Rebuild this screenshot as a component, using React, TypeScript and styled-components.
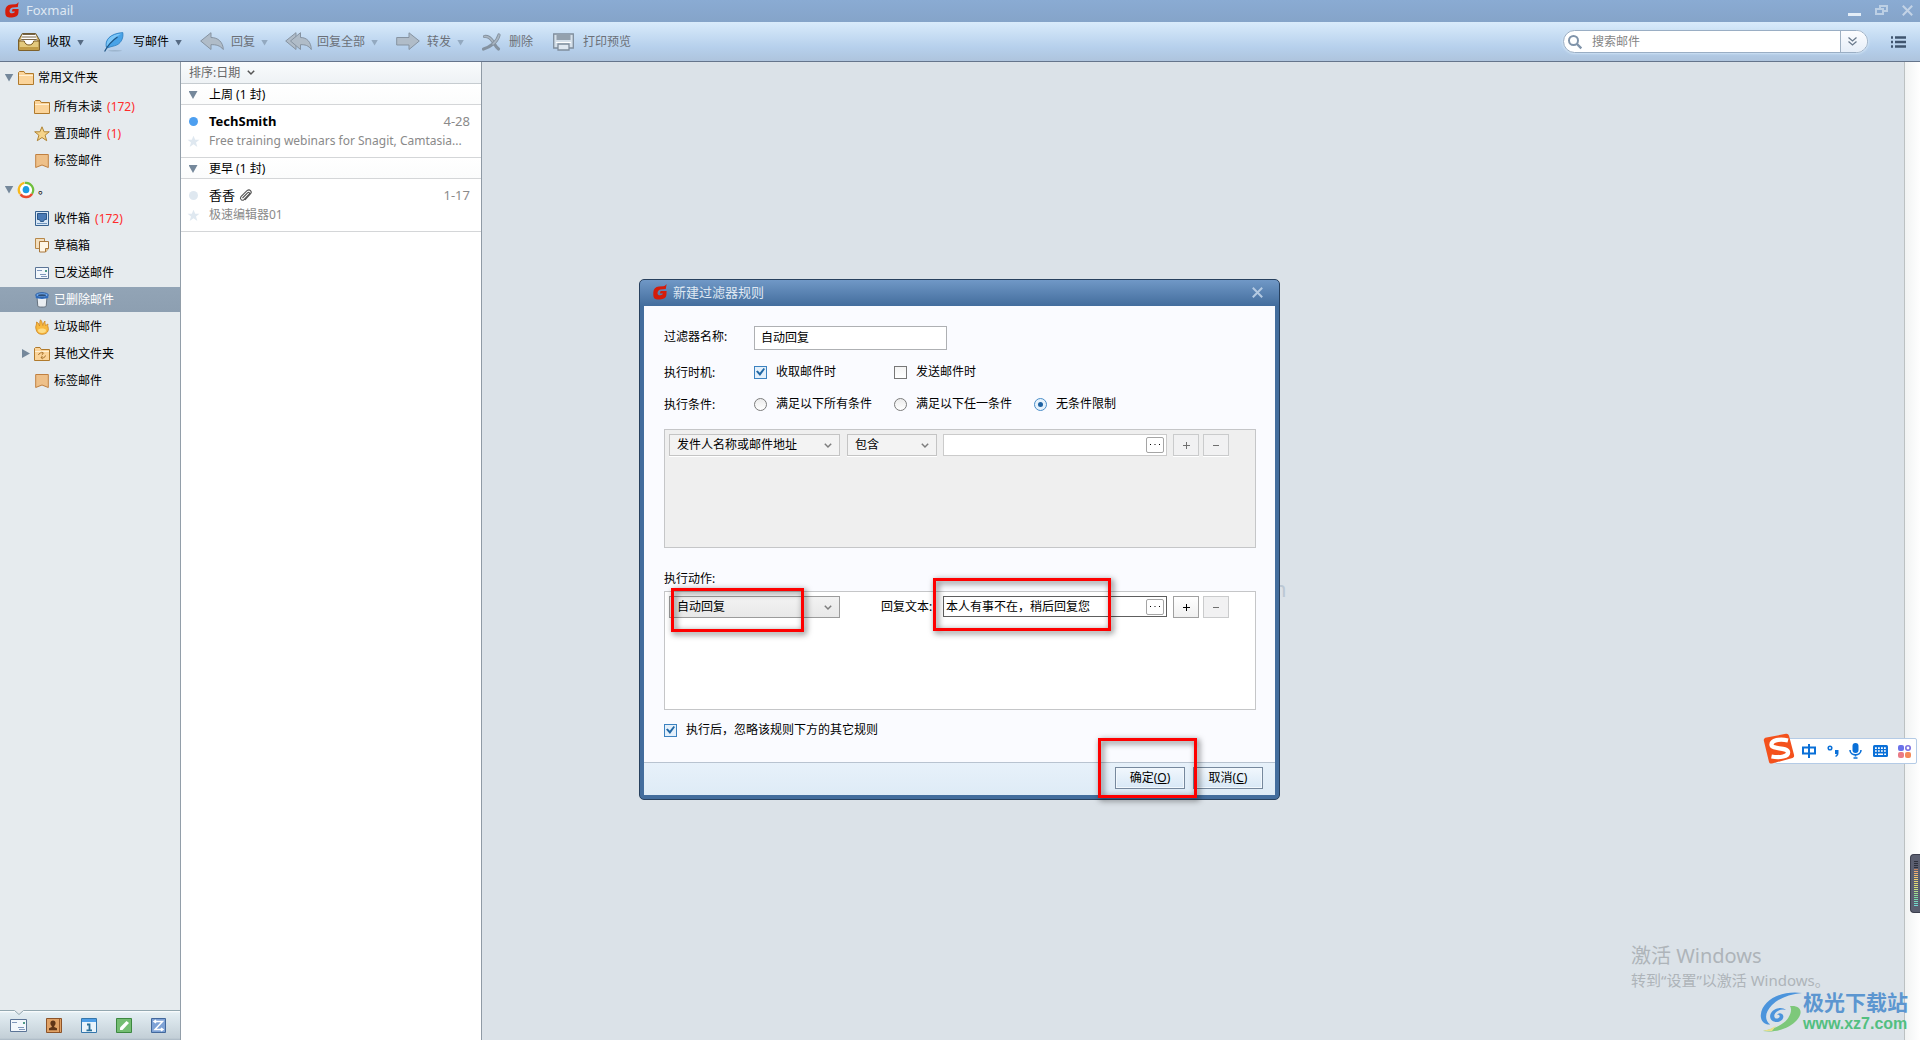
import React from "react";
import styled, { createGlobalStyle, css } from "styled-components";

const GlobalStyle = createGlobalStyle`
  * { box-sizing: border-box; }
  html, body { margin: 0; padding: 0; height: 100%; overflow: hidden; }
  body, button, input, select {
    font-family: "Noto Sans", "Noto Sans CJK SC", sans-serif;
    font-size: 12px;
    line-height: 20px;
    color: #000;
  }
  button { border: 0; padding: 0; margin: 0; background: none; }
  input, select { margin: 0; border-radius: 0; }
  svg { display: block; flex: none; overflow: visible; }
`;

/* ---------- window shell ---------- */

const Shell = styled.div`
  position: relative;
  display: flex;
  flex-direction: column;
  height: 100vh;
  min-height: 820px;
  overflow: hidden;
  background: #dbe2e8;
`;

const TitleBar = styled.header`
  display: flex;
  align-items: center;
  height: 22px;
  padding: 0 7px 2px 5px;
  background: linear-gradient(#8aabd3, #85a4c9);
`;

const AppName = styled.h1`
  flex: 1;
  margin: 0 0 0 7px;
  font-size: 13px;
  font-weight: 400;
  line-height: 20px;
  color: #dfe8f3;
`;

const WindowControls = styled.div`
  display: flex;
  align-items: center;
  gap: 14px;
`;

const Toolbar = styled.nav`
  display: flex;
  align-items: center;
  height: 40px;
  padding: 0 14px 0 18px;
  background: linear-gradient(#d9ebfb, #b6d0ec 65%, #aec4dd);
  border-bottom: 1px solid #65758c;
`;

const Tools = styled.div`
  display: flex;
  flex: 1;
  gap: 18px;
`;

const Tool = styled.button<{ $muted?: boolean }>`
  display: flex;
  align-items: center;
  height: 24px;
  color: ${(p) => (p.$muted ? "#6b7078" : "#000")};
`;

const ToolIcon = styled.span<{ $w: number }>`
  display: flex;
  justify-content: center;
  width: ${(p) => p.$w}px;
  margin-right: 7px;
`;

const Triangle = styled.i<{ $color?: string; $right?: boolean; $size?: number }>`
  display: block;
  width: ${(p) => (p.$right ? 8 : p.$size ?? 9)}px;
  height: ${(p) => (p.$right ? 9 : (p.$size ?? 9) - 1)}px;
  background: ${(p) => p.$color ?? "#75889b"};
  clip-path: ${(p) => (p.$right ? "polygon(0 0, 100% 50%, 0 100%)" : "polygon(0 0, 100% 0, 50% 100%)")};
`;

const ToolArrow = styled(Triangle)`
  margin: 2px 0 0 6px;
`;

const SearchBox = styled.form`
  display: flex;
  align-items: center;
  width: 305px;
  height: 23px;
  margin-right: 23px;
  padding-left: 4px;
  overflow: hidden;
  background: #fff;
  border: 1px solid #9aaec4;
  border-radius: 12px;
  box-shadow: 0 0 2px 1px #cfe2f4;
`;

const SearchInput = styled.input`
  flex: 1;
  min-width: 0;
  height: 20px;
  padding: 0 0 0 10px;
  border: 0;
  outline: 0;
  background: none;
  &::placeholder { color: #858585; opacity: 1; }
`;

const SearchMore = styled.button`
  display: flex;
  align-items: center;
  justify-content: center;
  width: 27px;
  height: 21px;
  padding-right: 4px;
  border-left: 1px solid #9fb0c2;
  background: linear-gradient(#fcfdff, #e6eef8);
`;

const Main = styled.div`
  display: flex;
  flex: 1;
  min-height: 0;
`;

/* ---------- folder tree ---------- */

const Sidebar = styled.aside`
  display: flex;
  flex-direction: column;
  width: 181px;
  background: #e6ebee;
  border-right: 1px solid #929ea9;
`;

const Tree = styled.ul`
  flex: 1;
  margin: 0;
  padding: 0;
  list-style: none;
`;

const Folder = styled.li<{ $root?: boolean; $selected?: boolean }>`
  display: flex;
  align-items: center;
  gap: 4px;
  height: ${(p) => (p.$root ? 31 : 27)}px;
  padding-left: ${(p) => (p.$root ? 4 : 20)}px;
  ${(p) =>
    p.$selected &&
    css`
      height: 25px;
      margin: 1px 0;
      color: #fff;
      background: linear-gradient(#92a4b6, #8d9fb1);
    `}
`;

const Slot = styled.span<{ $w: number; $end?: boolean }>`
  display: flex;
  justify-content: ${(p) => (p.$end ? "flex-end" : "center")};
  width: ${(p) => p.$w}px;
`;

const Count = styled.span`
  margin-left: 1px;
  color: #ff2b2b;
`;

const ModuleBar = styled.div`
  display: flex;
  height: 30px;
  padding-left: 1px;
  border-top: 1px solid #93a8b0;
  background: linear-gradient(#fff, #e3eef3 2px, #c3cfd7 27px, #a9b7c3);
`;

const ModuleButton = styled.button`
  position: relative;
  display: flex;
  align-items: center;
  justify-content: center;
  width: 35px;
  height: 29px;
`;

const Notch = styled.svg`
  position: absolute;
  top: -1px;
  left: 13px;
`;

/* ---------- message list ---------- */

const MessageList = styled.section`
  width: 301px;
  background: #fff;
  border-right: 1px solid #8f9aa5;
`;

const SortBar = styled.button`
  display: flex;
  align-items: center;
  gap: 7px;
  width: 100%;
  height: 22px;
  padding-left: 8px;
  color: #686868;
  background: linear-gradient(#f9fbfc, #eef2f5);
  border-bottom: 1px solid #c6ccd0;
`;

const GroupHead = styled.h2`
  display: flex;
  align-items: center;
  gap: 8px;
  height: 21px;
  margin: 0;
  padding: 2px 0 0 4px;
  font-size: 12px;
  font-weight: 400;
  background: linear-gradient(#fff, #fbfcfc);
  border-bottom: 1px solid #d4d6d8;
`;

const Message = styled.article`
  display: grid;
  grid-template-columns: 16px 1fr auto;
  column-gap: 8px;
  align-items: center;
  justify-items: start;
  padding: 6px 11px 6px 4px;
  border-bottom: 1px solid #d4d6d8;
`;

const Dot = styled.i<{ $unread?: boolean }>`
  justify-self: center;
  width: 9px;
  height: 9px;
  border-radius: 50%;
  background: ${(p) => (p.$unread ? "#4d9ff0" : "#dfe8f0")};
`;

const Sender = styled.strong<{ $unread?: boolean }>`
  display: flex;
  align-items: center;
  gap: 4px;
  font-size: 13px;
  font-weight: ${(p) => (p.$unread ? 700 : 400)};
`;

const DateText = styled.time`
  font-size: 13px;
  color: #8a8a8a;
`;

const Star = styled.svg`
  justify-self: center;
`;

const Subject = styled.p`
  grid-column: 2 / 4;
  margin: 0;
  color: #8a8a8a;
  white-space: nowrap;
`;

const Preview = styled.main`
  flex: 1;
`;

const Gutter = styled.div`
  width: 16px;
  background: linear-gradient(90deg, #f1f3f3, #fff);
  border-left: 1px solid #bcc1c2;
`;

/* ---------- filter dialog ---------- */

const Backdrop = styled.span`
  position: absolute;
  top: 573px;
  left: calc(50% + 313px);
  font-size: 22px;
  line-height: 30px;
  color: #bcc8d4;
`;

const Dialog = styled.div`
  position: absolute;
  top: 279px;
  left: calc(50% - 321px);
  width: 641px;
  padding: 0 4px 4px;
  border: 1px solid #27405e;
  border-radius: 5px;
  background: linear-gradient(#7098c6, #436d9d 26px);
`;

const DialogTitle = styled.header`
  display: flex;
  align-items: center;
  height: 26px;
  padding: 0 12px 2px 9px;
`;

const DialogName = styled.h2`
  flex: 1;
  margin: 0 0 0 6px;
  font-size: 13px;
  font-weight: 400;
  line-height: 20px;
  color: #dfe8f2;
`;

const DialogBody = styled.div`
  padding: 20px 19px 22px 20px;
  background: #fafbff;
`;

const Fields = styled.div`
  display: grid;
  gap: 12px;
  margin-bottom: 15px;
`;

const FieldRow = styled.div<{ $h?: number }>`
  display: grid;
  grid-template-columns: 90px 140px 140px 1fr;
  height: ${(p) => p.$h ?? 20}px;
`;

const FieldLabel = styled.label`
  line-height: 22px;
`;

const NameInput = styled.input`
  grid-column: 2 / 4;
  width: 193px;
  height: 24px;
  padding: 0 6px 2px;
  border: 1px solid #aeb0b3;
  background: #fff;
`;

const Option = styled.label`
  display: flex;
  align-items: center;
  gap: 9px;
  height: 20px;
`;

const Check = styled.input`
  appearance: none;
  display: flex;
  align-items: center;
  justify-content: center;
  width: 13px;
  height: 13px;
  border: 1px solid #777;
  background: linear-gradient(#f4f4f4, #fff);
  &:checked {
    border-color: #3c82c0;
    background: #e4f0fb;
  }
  &:checked::before {
    content: "";
    width: 9px;
    height: 8px;
    background: #2268a5;
    clip-path: polygon(0 45%, 18% 30%, 42% 60%, 84% 0, 100% 14%, 44% 100%);
  }
`;

const Radio = styled.input`
  appearance: none;
  display: flex;
  align-items: center;
  justify-content: center;
  width: 13px;
  height: 13px;
  border: 1px solid #7b7b7b;
  border-radius: 50%;
  background: linear-gradient(#ececec, #fff);
  &:checked {
    border-color: #4a8dc8;
    background: #e6f2fc;
  }
  &:checked::before {
    content: "";
    width: 5px;
    height: 5px;
    border-radius: 50%;
    background: #1d62a3;
  }
`;

const RuleBox = styled.div<{ $off?: boolean }>`
  display: flex;
  align-items: flex-start;
  height: 119px;
  padding: 4px;
  border: 1px solid #c5c6c8;
  background: ${(p) => (p.$off ? "#efefef" : "#fff")};
`;

const SelectWrap = styled.span<{ $w: number }>`
  position: relative;
  width: ${(p) => p.$w}px;
  margin-right: ${(p) => (p.$w > 100 ? 7 : 6)}px;
  svg { position: absolute; right: 8px; top: 9px; pointer-events: none; }
`;

const Select = styled.select<{ $off?: boolean }>`
  appearance: none;
  display: block;
  width: 100%;
  height: 22px;
  padding: 0 7px;
  border: 1px solid ${(p) => (p.$off ? "#c4c4c4" : "#9b9b9b")};
  background: ${(p) => (p.$off ? "#f3f3f3" : "linear-gradient(#f2f2f2, #e8e8e8)")};
  box-shadow: ${(p) => (p.$off ? "0 1px 0 #fff" : "none")};
`;

const ValueBox = styled.span<{ $off?: boolean }>`
  display: flex;
  align-items: center;
  width: 224px;
  height: ${(p) => (p.$off ? 22 : 21)}px;
  margin-right: 6px;
  padding-right: 2px;
  border: 1px solid ${(p) => (p.$off ? "#cbcbcb" : "#5e5e5e")};
  background: #fff;
`;

const ValueInput = styled.input`
  flex: 1;
  min-width: 0;
  height: 19px;
  padding: 0 2px;
  border: 0;
  background: none;
`;

const MoreButton = styled.button`
  display: flex;
  align-items: center;
  justify-content: center;
  width: 18px;
  height: 16px;
  border: 1px solid #a5a5a5;
  border-radius: 2px;
  background: #fff;
`;

const StepButton = styled.button<{ $off?: boolean }>`
  display: flex;
  align-items: center;
  justify-content: center;
  width: 26px;
  height: 22px;
  margin-right: 4px;
  border: 1px solid ${(p) => (p.$off ? "#cacbcc" : "#a0a0a0")};
  background: ${(p) => (p.$off ? "#f1f1f2" : "linear-gradient(#fff, #f0f0f0)")};
  box-shadow: 0 1px 0 #fff;
`;

const ReplyLabel = styled.label`
  width: 62px;
  margin-left: 34px;
  line-height: 22px;
`;

const SectionLabel = styled.p`
  margin: 21px 0 2px;
`;

const LastOption = styled(Option)`
  margin-top: 10px;
`;

const DialogFooter = styled.footer`
  display: flex;
  justify-content: flex-end;
  gap: 8px;
  height: 33px;
  padding: 4px 12px 0 0;
  border-top: 1px solid #b8c3d0;
  background: linear-gradient(#e7f1fa, #deebf6);
`;

const DialogButton = styled.button`
  width: 70px;
  height: 22px;
  border: 1px solid #76889d;
  background: linear-gradient(#f1f7fd, #d8e8f6);
  box-shadow: inset 0 0 0 1px #f2f8fd;
`;

const Highlight = styled.div<{ $x: number; $y: number; $w: number; $h: number }>`
  position: absolute;
  left: ${(p) => p.$x}px;
  top: ${(p) => p.$y}px;
  width: ${(p) => p.$w}px;
  height: ${(p) => p.$h}px;
  border: 3px solid #fe0000;
  filter: drop-shadow(2px 2px 3px rgba(0, 0, 0, 0.65));
  pointer-events: none;
`;

/* ---------- desktop overlays ---------- */

const ImeBar = styled.div`
  position: absolute;
  top: 738px;
  right: 3px;
  display: flex;
  align-items: center;
  justify-content: space-between;
  width: 142px;
  height: 26px;
  padding: 0 5px 0 26px;
  border: 1px solid #b4cbe6;
  border-radius: 2px;
  background: #fff;
`;

const ImeLogo = styled.svg`
  position: absolute;
  left: -13px;
  top: -6px;
`;

const Meter = styled.div`
  position: absolute;
  top: 854px;
  right: 0;
  width: 10px;
  height: 59px;
  padding: 6px 2px 6px 3px;
  border: 1px solid #3c3f4e;
  border-right: 0;
  border-radius: 4px 0 0 4px;
  background: #5b5f70;
`;

const MeterBars = styled.div`
  height: 45px;
  background: linear-gradient(#2d303c 7px, #f0a070 9px, #f0d070 18px, #d5e27a 27px, #7fdc9c 36px, #6fd8d8);
  mask-image: repeating-linear-gradient(#000 0 1px, transparent 1px 2px);
`;

const Activation = styled.div`
  position: absolute;
  right: 94px;
  bottom: 50px;
  width: 195px;
  color: #aeb4b9;
  white-space: nowrap;
`;

const ActivationTitle = styled.p`
  margin: 0;
  font-size: 20px;
  line-height: 28px;
`;

const ActivationText = styled.p`
  margin: 0;
  font-size: 15px;
  line-height: 20px;
`;

const SiteMark = styled.div`
  position: absolute;
  right: 12px;
  bottom: 6px;
  display: flex;
  align-items: center;
  gap: 1px;
`;

const SiteName = styled.p`
  margin: 0;
  font-size: 21px;
  font-weight: 700;
  line-height: 24px;
  color: #5c96d0;
`;

const SiteUrl = styled.p`
  margin: 0;
  font-family: "Liberation Sans", sans-serif;
  font-size: 16px;
  font-weight: 700;
  line-height: 20px;
  color: #52bf80;
`;

/* ---------- drawings ---------- */

const FoxLogo = () => (
  <svg width="14" height="16" viewBox="0 0 14 16">
    <path d="M13.600 0 12.800 5 7.500 5.400C5.300 5.700 4.600 7.600 4.500 9.300c0 1.400 1 2.100 2.700 2 1.500-.1 2.500-.7 2.700-1.700H6.800L7.600 6.900h6l-.2 4.200c-.4 2.900-2.600 4.300-6.400 4.300H4.200C1.500 15.400.3 13.700.3 11V8.300C.5 4.800 2.500 2.700 6 2.500l4.300-.3c1.500-.2 2.500-1 3.300-2.200z" fill="#d51c0a" />
  </svg>
);

const CloseIcon = ({ color = "#c3d3e6" }: { color?: string }) => (
  <svg width="11" height="11" viewBox="0 0 11 11">
    <path d="M.8.8l9.400 9.400M10.200.8.800 10.200" stroke={color} strokeWidth="2" />
  </svg>
);

const Chevron = ({ color = "#7d7d7d" }: { color?: string }) => (
  <svg width="8" height="5" viewBox="0 0 8 5">
    <path d="M.8.8 4 4 7.200.8" fill="none" stroke={color} strokeWidth="1.500" />
  </svg>
);

const InboxTool = () => (
  <svg width="22" height="18" viewBox="0 0 22 18">
    <path d="M4.300.5h13.400l3.800 6.500v9.500a1 1 0 0 1-1 1h-19a1 1 0 0 1-1-1V7z" fill="#cfae62" stroke="#6d5a34" />
    <path d="M4.500 1h13l2 7.500-4 1L11 13 6.500 9.500l-4-1z" fill="#fff" />
    <path d="M4.500 1.500h13M4 4h14M3.200 6.500h15.600" stroke="#776547" />
    <path d="M.8 8h5.400c.7 2.600 2.300 4 4.800 4s4.100-1.400 4.800-4h5.400v9.200H.8z" fill="#e3c97d" stroke="#7a5a22" />
    <path d="M1.500 14h19v2.800h-19z" fill="#c19c47" />
  </svg>
);

const FeatherTool = () => (
  <svg width="20" height="20" viewBox="0 0 20 20">
    <ellipse cx="11" cy="18.700" rx="7" ry=".8" fill="#9cb4cc" />
    <path d="M2.300 15C.8 8.500 5.500 1.500 18.800.6 19.800 6.500 16.500 12.500 10.500 13.800c-2.500.6-4.700 1.200-7 2z" fill="#48a3e8" />
    <path d="M2.300 14C1.500 8 6.500 2 18 1.200 12 4.500 7 9 3.500 14z" fill="#7cc6f7" />
    <path d="M2.300 15C.8 8.500 5.500 1.500 18.800.6 19.800 6.500 16.500 12.500 10.500 13.800c-2.500.6-4.700 1.200-7 2z" fill="none" stroke="#2a7cbf" strokeWidth=".8" />
    <path d="M.6 19.500C3 15 7.500 9 13.500 5" fill="none" stroke="#1f5583" strokeWidth="1.200" />
  </svg>
);

const grey = { fill: "#b0bcc8", stroke: "#8693a1", strokeLinejoin: "round" as const };

const ReplyTool = () => (
  <svg width="24" height="19" viewBox="0 0 24 19">
    <path d="M.7 9 11 .7v4.800C18 5.500 23 10 23.300 17.500 20 13.500 16 12.500 11 12.700V17.500z" {...grey} />
  </svg>
);

const ReplyAllTool = () => (
  <svg width="27" height="19" viewBox="0 0 27 19">
    <path d="M.7 9 11 .7v16.800z" {...grey} />
    <path d="M5.500 9 15.500.7v4.800C22 5.500 26 10 26.300 17.500 23.500 13.500 20 12.500 15.500 12.700V17.500z" {...grey} />
  </svg>
);

const ForwardTool = () => (
  <svg width="24" height="19" viewBox="0 0 24 19">
    <path d="M.7 5.500H13V.8L23.300 9 13 17.500V13H.7z" {...grey} />
  </svg>
);

const DeleteTool = () => (
  <svg width="20" height="18" viewBox="0 0 20 18">
    <path d="M2.500 3.500c4-.5 6 1.500 8 4.500s3 5.500 6 8M17 2c-1 4-3 6.500-6 9s-6 4-9.500 5" fill="none" stroke="#8492a0" strokeWidth="3.200" strokeLinecap="round" />
    <path d="M2.500 3.500c4-.5 6 1.500 8 4.500M17 2c-1 4-3 6.500-6 9" fill="none" stroke="#aab6c2" strokeWidth="1.600" strokeLinecap="round" />
  </svg>
);

const PrintTool = () => (
  <svg width="21" height="18" viewBox="0 0 21 18">
    <path d="M.7 1h19.600v14H.7z" fill="#d5e0ea" stroke="#7f8d9c" strokeWidth="1.300" />
    <path d="M3.500 1.500h14V7h-14z" fill="#94a1ae" />
    <path d="M3 9.500h15" stroke="#fff" />
    <path d="M5 11h11v6H5z" fill="#dfe8f1" stroke="#7f8d9c" strokeWidth="1.300" />
  </svg>
);

const FolderIcon = ({ sync }: { sync?: boolean }) => (
  <svg width="16" height="14" viewBox="0 0 16 14">
    <path d="M.5 13.500V1.500l1-1H6l1.200 2h8.300v11z" fill="#fbd49a" stroke="#b07a2c" />
    <path d="M1 4.500h14" stroke="#fff0d4" />
    {sync && (
      <path
        d="M4.500 8a3 3 0 0 1 4.500-1.800M11.500 8.500A3 3 0 0 1 7 10.500M8 4.800l1.500 1.500L7.700 8M8.500 9 7 10.500l1.700 1.400"
        fill="none"
        stroke="#a8722c"
      />
    )}
  </svg>
);

const starPath = "M8 .8l2.100 5h5.200l-4.200 3.400 1.600 5.500L8 11.500l-4.700 3.200 1.600-5.500L.7 5.800h5.200z";

const StarIcon = () => (
  <svg width="16" height="16" viewBox="0 0 16 16">
    <path d={starPath} fill="#f6d489" stroke="#b08434" />
  </svg>
);

const PaleStar = () => (
  <Star width="13" height="13" viewBox="0 0 16 16">
    <path d={starPath} fill="#dfe8f0" />
  </Star>
);

const TagIcon = () => (
  <svg width="14" height="14" viewBox="0 0 14 14">
    <path d="M.7.5h12.600v13L7 11 .7 13.500z" fill="#eec089" stroke="#c08040" />
  </svg>
);

const InboxIcon = () => (
  <svg width="14" height="15" viewBox="0 0 14 15">
    <path d="M.5.5h13v14H.5z" fill="#d7e6f5" stroke="#35608f" />
    <path d="M2.500 2.500h9v6h-2l-1 2h-3l-1-2h-2z" fill="#4a7ab5" stroke="#2c5788" />
    <path d="M2 12.500h10" stroke="#7095bd" />
  </svg>
);

const DraftIcon = () => (
  <svg width="14" height="15" viewBox="0 0 14 15">
    <path d="M.5.500h9v10h-9z" fill="#f3dfbf" stroke="#b78849" />
    <path d="M4.500 3.500h9v7l-3 3.500h-6z" fill="#fff6e6" stroke="#a8763a" />
    <path d="M13.500 10.500h-3V14" fill="#ecc98f" stroke="#a8763a" />
  </svg>
);

const MailIcon = ({ w = 14, h = 12 }: { w?: number; h?: number }) => (
  <svg width={w} height={h} viewBox={`0 0 ${w} ${h}`}>
    <path d={`M.5.500h${w - 1}v${h - 1}H.500z`} fill="#f2f7fc" stroke="#5b7496" />
    <path d={`M2 3.500h5M${w - 9} ${h - 5}.5h6M${w - 8} ${h - 3}.5h6`} stroke="#7f97bb" />
    <path d={`M${w - 4} 3h2v2h-2z`} fill="#4f9a86" />
  </svg>
);

const TrashIcon = () => (
  <svg width="14" height="16" viewBox="0 0 14 16">
    <path d="M2 5h10l-.8 9.200c0 1.200-8.400 1.200-8.400 0z" fill="#e9edf1" stroke="#66727f" />
    <path d="M.7 3.200h12.600v2.600c-2 1.500-10.600 1.500-12.600 0z" fill="#2d6cc0" />
    <ellipse cx="7" cy="3" rx="6.300" ry="2.300" fill="#6da6ea" stroke="#2a5da3" />
    <ellipse cx="7" cy="3.200" rx="4" ry="1" fill="#2d4d75" />
  </svg>
);

const FireIcon = () => (
  <svg width="14" height="16" viewBox="0 0 14 16">
    <path
      d="M1 10C0 7 2 6 1.500 3 4 4 4 6 4.500 7 5 5 4.500 2.500 5.500.8 7.500 2.500 7 5 7.800 6.500 8.500 5 8.500 3.500 10 2c-.3 2 .5 3 .5 4.500C11.500 6 12 5.500 13 5c-1 2 .8 3.500.3 6-.6 3-3 4.300-6.300 4.300S1.500 13.500 1 10z"
      fill="#f8b93e"
      stroke="#cd8420"
      strokeWidth=".8"
    />
    <path d="M3 11c1-2 7-2 8 0 .3 2-1.500 3-4 3s-4.300-1-4-3z" fill="#fddc85" />
  </svg>
);

const AccountIcon = () => (
  <svg width="16" height="16" viewBox="0 0 16 16">
    <circle cx="8" cy="8" r="7.500" fill="#fff" />
    <path d="M6.500.8A7.300 7.300 0 0 0 2 12" fill="none" stroke="#f9b91c" strokeWidth="2.200" />
    <path d="M7 .9a7.200 7.200 0 0 1 7 11" fill="none" stroke="#6fbf3d" strokeWidth="2.200" />
    <path d="M2.500 12.300a7 7 0 0 0 11.500-.5" fill="none" stroke="#ea4a2c" strokeWidth="2.400" />
    <path d="M8 4c2.400 0 3.400 2 3.400 4S10 11.300 8 11.300 4.600 10 4.600 8 5.600 4 8 4z" fill="#1c9ce2" />
  </svg>
);

const ClipIcon = () => (
  <svg width="13" height="13" viewBox="0 0 13 13">
    <path
      d="M3.500 9 8.800 3.700c1-1 2.400.3 1.400 1.400L5 10.600c-1.800 1.800-4.800-.8-3-3L8 1.700c2.600-2.200 5.600.8 3.400 3.200L6 11"
      fill="none"
      stroke="#555"
      strokeWidth="1.100"
    />
  </svg>
);

const ContactsIcon = () => (
  <svg width="16" height="15" viewBox="0 0 16 15">
    <path d="M.5.500h15v14H.500z" fill="#e0a266" stroke="#8c5328" />
    <path d="M13.500 1v13" stroke="#9a5c2c" />
    <path d="M7 2.500c3.500 0 3 4.500 1.200 5.500v1l2.800 1.200v2H3v-2L5.800 9V8C4 7 3.500 2.500 7 2.500z" fill="#5f3517" />
  </svg>
);

const CalendarIcon = () => (
  <svg width="16" height="15" viewBox="0 0 16 15">
    <path d="M.5.500h15v14H.500z" fill="#e9f4fb" stroke="#3476ab" />
    <path d="M1 1h14v3H1z" fill="#4e9fe8" />
    <path d="M6 6.500h2.500v5.500M5.500 12.300H11" fill="none" stroke="#2b7199" strokeWidth="1.800" />
  </svg>
);

const NoteIcon = () => (
  <svg width="16" height="15" viewBox="0 0 16 15">
    <path d="M.5.500h15v14H.500z" fill="#74bd72" stroke="#3c8840" />
    <path d="M4 9.500 10.500 3l2.500 2-6.500 7L4 12z" fill="#fff" />
  </svg>
);

const RssIcon = () => (
  <svg width="15" height="15" viewBox="0 0 15 15">
    <path d="M.5.500h14v14H.500z" fill="#7fa3d6" stroke="#42689c" />
    <path d="M3 3.500h8.500L4 11.500h8M5 2 3 3.500 5 5M10 10l2 1.500-2 1.500" fill="none" stroke="#fff" strokeWidth="1.500" />
  </svg>
);

const Plus = ({ color }: { color: string }) => (
  <svg width="7" height="7" viewBox="0 0 7 7">
    <path d="M0 3.500h7M3.500 0v7" stroke={color} />
  </svg>
);

const Minus = () => (
  <svg width="6" height="7" viewBox="0 0 6 7">
    <path d="M0 3.500h6" stroke="#6f6f6f" />
  </svg>
);

const Dots = () => (
  <svg width="10" height="2" viewBox="0 0 10 2">
    <path d="M0 .5h1M4.500.5h1M9 .5h1" stroke="#000" />
  </svg>
);

/* ---------- data ---------- */

const tools = [
  { label: "收取", icon: <InboxTool />, w: 22, arrow: true },
  { label: "写邮件", icon: <FeatherTool />, w: 24, arrow: true },
  { label: "回复", icon: <ReplyTool />, w: 24, arrow: true, muted: true },
  { label: "回复全部", icon: <ReplyAllTool />, w: 24, arrow: true, muted: true },
  { label: "转发", icon: <ForwardTool />, w: 24, arrow: true, muted: true },
  { label: "删除", icon: <DeleteTool />, w: 20, muted: true },
  { label: "打印预览", icon: <PrintTool />, w: 25, muted: true },
];

type FolderData = {
  label: string;
  icon: React.ReactNode;
  count?: number;
  root?: boolean;
  selected?: boolean;
  collapsed?: boolean;
};

const folders: FolderData[] = [
  { label: "常用文件夹", icon: <FolderIcon />, root: true },
  { label: "所有未读", icon: <FolderIcon />, count: 172 },
  { label: "置顶邮件", icon: <StarIcon />, count: 1 },
  { label: "标签邮件", icon: <TagIcon /> },
  { label: "。", icon: <AccountIcon />, root: true },
  { label: "收件箱", icon: <InboxIcon />, count: 172 },
  { label: "草稿箱", icon: <DraftIcon /> },
  { label: "已发送邮件", icon: <MailIcon /> },
  { label: "已删除邮件", icon: <TrashIcon />, selected: true },
  { label: "垃圾邮件", icon: <FireIcon /> },
  { label: "其他文件夹", icon: <FolderIcon sync />, collapsed: true },
  { label: "标签邮件", icon: <TagIcon /> },
];

const modules = [
  { label: "邮件", icon: <MailIcon w={17} h={13} /> },
  { label: "联系人", icon: <ContactsIcon /> },
  { label: "日历", icon: <CalendarIcon /> },
  { label: "便签", icon: <NoteIcon /> },
  { label: "订阅", icon: <RssIcon /> },
];

/* ---------- sections ---------- */

const FilterDialog = () => (
  <Dialog role="dialog" aria-labelledby="dialog-name">
    <DialogTitle>
      <FoxLogo />
      <DialogName id="dialog-name">新建过滤器规则</DialogName>
      <button aria-label="关闭">
        <CloseIcon color="#b4cae2" />
      </button>
    </DialogTitle>
    <DialogBody>
      <Fields>
        <FieldRow $h={24}>
          <FieldLabel htmlFor="rule-name">过滤器名称:</FieldLabel>
          <NameInput id="rule-name" defaultValue="自动回复" />
        </FieldRow>
        <FieldRow>
          <FieldLabel as="span">执行时机:</FieldLabel>
          <Option>
            <Check type="checkbox" defaultChecked />
            收取邮件时
          </Option>
          <Option>
            <Check type="checkbox" />
            发送邮件时
          </Option>
        </FieldRow>
        <FieldRow>
          <FieldLabel as="span">执行条件:</FieldLabel>
          <Option>
            <Radio type="radio" name="match" />
            满足以下所有条件
          </Option>
          <Option>
            <Radio type="radio" name="match" />
            满足以下任一条件
          </Option>
          <Option>
            <Radio type="radio" name="match" defaultChecked />
            无条件限制
          </Option>
        </FieldRow>
      </Fields>
      <RuleBox $off>
        <SelectWrap $w={171}>
          <Select $off aria-label="条件字段">
            <option>发件人名称或邮件地址</option>
          </Select>
          <Chevron />
        </SelectWrap>
        <SelectWrap $w={90}>
          <Select $off aria-label="匹配方式">
            <option>包含</option>
          </Select>
          <Chevron />
        </SelectWrap>
        <ValueBox $off>
          <ValueInput aria-label="条件内容" />
          <MoreButton aria-label="更多"><Dots /></MoreButton>
        </ValueBox>
        <StepButton $off aria-label="添加条件"><Plus color="#6f6f6f" /></StepButton>
        <StepButton $off aria-label="删除条件"><Minus /></StepButton>
      </RuleBox>
      <SectionLabel>执行动作:</SectionLabel>
      <RuleBox>
        <SelectWrap $w={171}>
          <Select aria-label="执行动作">
            <option>自动回复</option>
          </Select>
          <Chevron />
        </SelectWrap>
        <ReplyLabel htmlFor="reply-text">回复文本:</ReplyLabel>
        <ValueBox>
          <ValueInput id="reply-text" defaultValue="本人有事不在，稍后回复您" />
          <MoreButton aria-label="更多"><Dots /></MoreButton>
        </ValueBox>
        <StepButton aria-label="添加动作"><Plus color="#000" /></StepButton>
        <StepButton $off aria-label="删除动作"><Minus /></StepButton>
      </RuleBox>
      <LastOption>
        <Check type="checkbox" defaultChecked />
        执行后，忽略该规则下方的其它规则
      </LastOption>
    </DialogBody>
    <DialogFooter>
      <DialogButton>确定(<u>O</u>)</DialogButton>
      <DialogButton>取消(<u>C</u>)</DialogButton>
    </DialogFooter>
    <Highlight $x={31} $y={308} $w={133} $h={44} />
    <Highlight $x={293} $y={298} $w={178} $h={53} />
    <Highlight $x={458} $y={458} $w={99} $h={60} />
  </Dialog>
);

const ImeToolbar = () => (
  <ImeBar>
    <ImeLogo width="32" height="32" viewBox="0 0 32 32">
      <path d="M3.500 4.500 23 .8c1.500-.2 2.500.5 3 2l5 19c.3 1.500 0 2.500-1.500 3.200L9 30.500c-1.500.3-2.500 0-3-1.500L.8 7.500c-.2-1.500.7-2.700 2.700-3z" fill="#f4511c" />
      <path d="M25 7.500C17 5.500 8 7 8.500 12c.5 4.500 15.500 2 16.500 7 .8 4.500-8 6-16.500 4.500" fill="none" stroke="#fff" strokeWidth="4.300" />
    </ImeLogo>
    <svg width="14" height="14" viewBox="0 0 14 14">
      <path d="M1 3.500h12v6H1zM7 0v14" fill="none" stroke="#0a70d8" strokeWidth="2" />
    </svg>
    <svg width="12" height="12" viewBox="0 0 12 12">
      <circle cx="3" cy="3" r="1.800" fill="none" stroke="#0a70d8" strokeWidth="1.500" />
      <path d="M8 5h3.500v3c0 2-1 3.500-3 4V10.500c.8-.3 1.200-.8 1.200-1.500H8z" fill="#0a70d8" />
    </svg>
    <svg width="13" height="16" viewBox="0 0 13 16">
      <rect x="3.500" y="0" width="6" height="10" rx="3" fill="#0a70d8" />
      <path d="M1 7c0 6.500 11 6.500 11 0M6.500 12v1.500M4.500 15h4" fill="none" stroke="#0a70d8" strokeWidth="1.600" />
    </svg>
    <svg width="15" height="12" viewBox="0 0 15 12">
      <rect width="15" height="12" rx="1.500" fill="#0a70d8" />
      <path d="M2 3.200h11M2 6h11" stroke="#fff" strokeWidth="1.700" strokeDasharray="1.800 1.200" />
      <path d="M2 9.200h1.800M5 9.200h5M11.200 9.200H13" stroke="#fff" strokeWidth="1.500" />
    </svg>
    <svg width="13" height="13" viewBox="0 0 13 13">
      <rect width="6" height="6" rx="2" fill="#6a72ea" />
      <circle cx="10" cy="3" r="2.200" fill="none" stroke="#7b6fe0" strokeWidth="1.600" />
      <rect y="7" width="6" height="6" rx="2" fill="#ea7b86" />
      <rect x="7" y="7" width="6" height="6" rx="2" fill="#f58a5a" />
    </svg>
  </ImeBar>
);

export default function App() {
  return (
    <Shell>
      <GlobalStyle />
      <TitleBar>
        <FoxLogo />
        <AppName>Foxmail</AppName>
        <WindowControls>
          <button aria-label="最小化">
            <svg width="13" height="11" viewBox="0 0 13 11">
              <path d="M0 9.500h13" stroke="#e3edf7" strokeWidth="3" />
            </svg>
          </button>
          <button aria-label="还原">
            <svg width="13" height="10" viewBox="0 0 13 10">
              <path d="M5 3V1h7v5H9M1 4h7v5H1z" fill="none" stroke="#bdd0e5" strokeWidth="2" />
            </svg>
          </button>
          <button aria-label="关闭"><CloseIcon /></button>
        </WindowControls>
      </TitleBar>
      <Toolbar>
        <Tools>
          {tools.map((t) => (
            <Tool key={t.label} $muted={t.muted}>
              <ToolIcon $w={t.w}>{t.icon}</ToolIcon>
              {t.label}
              {t.arrow && <ToolArrow $size={7} $color={t.muted ? "#93a9c0" : "#566b84"} />}
            </Tool>
          ))}
        </Tools>
        <SearchBox>
          <svg width="14" height="14" viewBox="0 0 14 14">
            <circle cx="5.500" cy="5.500" r="4.500" fill="none" stroke="#8094aa" strokeWidth="2" />
            <path d="M9 9l4.300 4.300" stroke="#8094aa" strokeWidth="2.400" />
          </svg>
          <SearchInput aria-label="搜索邮件" placeholder="搜索邮件" />
          <SearchMore type="button" aria-label="高级搜索">
            <svg width="9" height="9" viewBox="0 0 9 9">
              <path d="M.5.500l4 3.500 4-3.500M.5 4.500l4 3.500 4-3.500" fill="none" stroke="#6a7a8c" strokeWidth="1.300" />
            </svg>
          </SearchMore>
        </SearchBox>
        <button aria-label="菜单">
          <svg width="15" height="12" viewBox="0 0 15 12">
            <path d="M0 1.500h2M4 1.500h11M0 6h2M4 6h11M0 10.500h2M4 10.500h11" stroke="#40556f" strokeWidth="2.500" />
          </svg>
        </button>
      </Toolbar>
      <Main>
        <Sidebar>
          <Tree>
            {folders.map((f, i) => (
              <Folder key={i} $root={f.root} $selected={f.selected}>
                <Slot $w={10} $end={f.collapsed}>
                  {f.root && <Triangle />}
                  {f.collapsed && <Triangle $right />}
                </Slot>
                <Slot $w={16}>{f.icon}</Slot>
                {f.label}
                {f.count && <Count>({f.count})</Count>}
              </Folder>
            ))}
          </Tree>
          <ModuleBar>
            {modules.map((m, i) => (
              <ModuleButton key={m.label} aria-label={m.label}>
                {i === 0 && (
                  <Notch width="10" height="5" viewBox="0 0 10 5">
                    <path d="M0 0h10L5 4.500z" fill="#e6ebee" />
                    <path d="M.5.500 5 4.500 9.500.5" fill="none" stroke="#93a8b0" />
                  </Notch>
                )}
                {m.icon}
              </ModuleButton>
            ))}
          </ModuleBar>
        </Sidebar>
        <MessageList>
          <SortBar>
            排序:日期
            <Chevron color="#555" />
          </SortBar>
          <GroupHead><Slot $w={16}><Triangle /></Slot>上周 (1 封)</GroupHead>
          <Message>
            <Dot $unread />
            <Sender $unread>TechSmith</Sender>
            <DateText>4-28</DateText>
            <PaleStar />
            <Subject>Free training webinars for Snagit, Camtasia...</Subject>
          </Message>
          <GroupHead><Slot $w={16}><Triangle /></Slot>更早 (1 封)</GroupHead>
          <Message>
            <Dot />
            <Sender>香香<ClipIcon /></Sender>
            <DateText>1-17</DateText>
            <PaleStar />
            <Subject>极速编辑器01</Subject>
          </Message>
        </MessageList>
        <Preview />
        <Gutter />
      </Main>
      <Backdrop>n</Backdrop>
      <FilterDialog />
      <ImeToolbar />
      <Meter><MeterBars /></Meter>
      <Activation>
        <ActivationTitle>激活 Windows</ActivationTitle>
        <ActivationText>转到“设置”以激活 Windows。</ActivationText>
      </Activation>
      <SiteMark>
        <svg width="42" height="40" viewBox="0 0 42 40">
          <path d="M42 1C22-2 2 8 .8 23c-.5 6 4 10 9.500 9.500C4 28 5 20 12 13 19 6 29 2.500 42 1z" fill="#4b94dc" />
          <path d="M26 18c-4-4-13-2-15.500 4-2 6 4 9.500 9 7.500 4-1.700 5-5.500 2.500-7.500-1.500-1.300-4-.8-5 .8 3-.5 3.500 2 1.500 3.300-2.500 1.500-5-.5-4-3.500 1.500-4.500 8-6 11.500-4.600z" fill="#4b94dc" />
          <path d="M30 14c12-1 13 7 7 14C30 36 16 41 3 39c9-2 19-5 24.500-12C31 22 32 17 30 14z" fill="#7dc87a" />
          <path d="M3 39c5-1 9-3 13-5l-4 5z" fill="#e6e08a" />
        </svg>
        <div>
          <SiteName>极光下载站</SiteName>
          <SiteUrl>www.xz7.com</SiteUrl>
        </div>
      </SiteMark>
    </Shell>
  );
}
